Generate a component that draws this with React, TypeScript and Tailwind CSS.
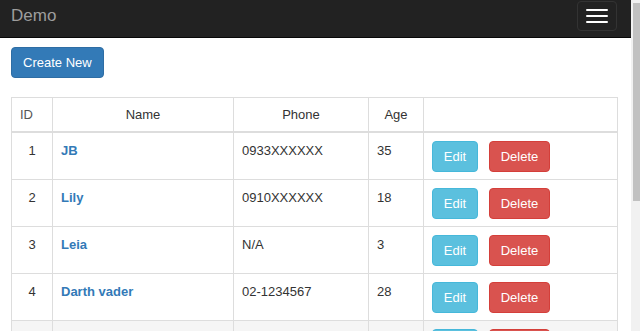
import React from 'react';

interface Person {
  id: number;
  name: string;
  phone: string;
  age: number;
}

const people: Person[] = [
  { id: 1, name: 'JB', phone: '0933XXXXXX', age: 35 },
  { id: 2, name: 'Lily', phone: '0910XXXXXX', age: 18 },
  { id: 3, name: 'Leia', phone: 'N/A', age: 3 },
  { id: 4, name: 'Darth vader', phone: '02-1234567', age: 28 },
];

const cell = 'border border-[#ddd] px-[8px] pt-[8px] pb-[7px] align-top leading-[19px]';
const head = 'border border-[#ddd] border-b-2 px-[8px] py-[7px] leading-[19px] font-normal text-[#333]';

function Actions({ labels = true }: { labels?: boolean }) {
  return (
    <div className="flex gap-[11px]">
      <button
        aria-label="Edit"
        className="h-[31px] w-[46px] rounded-[4px] border border-[#46b8da] bg-[#5bc0de] text-[13px] text-white"
      >
        {labels && 'Edit'}
      </button>
      <button
        aria-label="Delete"
        className="h-[31px] w-[61px] rounded-[4px] border border-[#d43f3a] bg-[#d9534f] text-[13px] text-white"
      >
        {labels && 'Delete'}
      </button>
    </div>
  );
}

export default function App() {
  return (
    <div className="flex h-[331px] w-[640px] overflow-hidden bg-white font-['Liberation_Sans',Arial,sans-serif] text-[13px] text-[#333]">
      <div className="w-[631px] shrink-0">
        {/* navbar */}
        <nav className="flex h-[38px] items-start justify-between border-b border-[#080808] bg-[#222] pl-[11px] pr-[14px]">
          <span className="mt-[5px] text-[17px] leading-[22px] text-[#9d9d9d]">Demo</span>
          <button className="mt-[1px] flex h-[30px] w-[40px] flex-col items-center justify-center gap-[4px] rounded-[4px] border border-[#333]">
            <span className="block h-[2px] w-[22px] rounded-[1px] bg-white" />
            <span className="block h-[2px] w-[22px] rounded-[1px] bg-white" />
            <span className="block h-[2px] w-[22px] rounded-[1px] bg-white" />
          </button>
        </nav>

        <div className="pl-[11px] pt-[9px]">
          <button className="h-[31px] rounded-[4px] border border-[#2e6da4] bg-[#337ab7] px-[11px] text-[13px] leading-[19px] text-white">
            Create New
          </button>

          <table className="mt-[19px] w-[606px] table-fixed border-collapse">
            <colgroup>
              <col className="w-[41px]" />
              <col className="w-[181px]" />
              <col className="w-[135px]" />
              <col className="w-[55px]" />
              <col className="w-[194px]" />
            </colgroup>
            <thead>
              <tr>
                <th className={`${head} text-left text-[#555]`}>ID</th>
                <th className={`${head} text-center`}>Name</th>
                <th className={`${head} text-center`}>Phone</th>
                <th className={`${head} text-center`}>Age</th>
                <th className={head}></th>
              </tr>
            </thead>
            <tbody>
              {people.map((p) => (
                <tr key={p.id} className="bg-white">
                  <td className={`${cell} text-center`}>{p.id}</td>
                  <td className={cell}>
                    <a className="font-bold text-[#337ab7]">{p.name}</a>
                  </td>
                  <td className={cell}>{p.phone}</td>
                  <td className={cell}>{p.age}</td>
                  <td className={cell}>
                    <Actions />
                  </td>
                </tr>
              ))}
              {/* next row, only its top edge is in view */}
              <tr className="bg-[#f5f5f5]">
                <td className={cell}></td>
                <td className={cell}></td>
                <td className={cell}></td>
                <td className={cell}></td>
                <td className={cell}>
                  <Actions labels={false} />
                </td>
              </tr>
            </tbody>
          </table>
        </div>
      </div>

      {/* scrollbar */}
      <div className="w-[9px] shrink-0 bg-[#f1f1f1]">
        <div className="ml-[2px] mt-[3px] h-[198px] w-[7px] bg-[#c1c1c1]" />
      </div>
    </div>
  );
}
